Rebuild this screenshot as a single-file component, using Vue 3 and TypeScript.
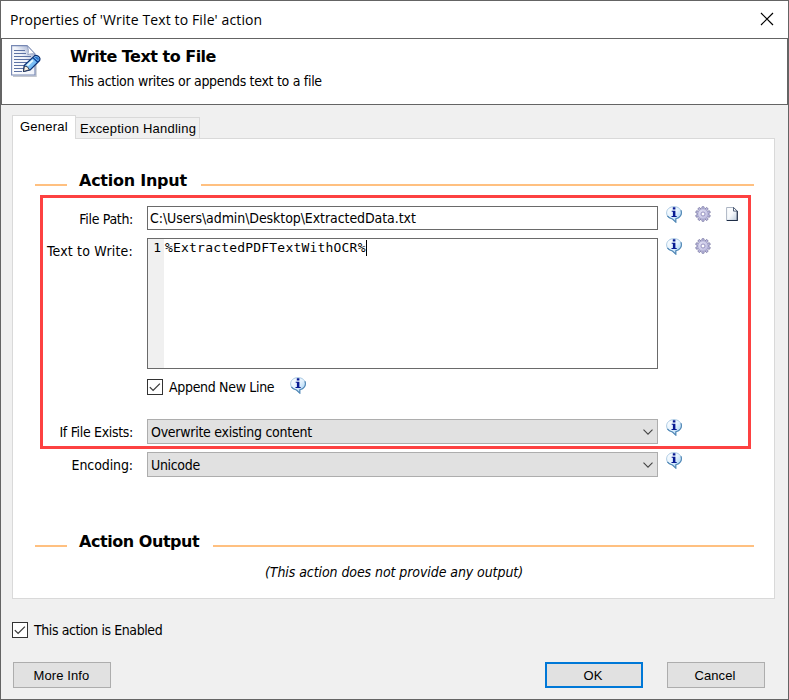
<script setup lang="ts">
import { ref, h, type FunctionalComponent } from 'vue'

const filePath = ref('C:\\Users\\admin\\Desktop\\ExtractedData.txt')
const textToWrite = ref('%ExtractedPDFTextWithOCR%')
const appendNewLine = ref(true)
const enabled = ref(true)

const InfoIcon: FunctionalComponent = () =>
  h('svg', { width: 16, height: 17, viewBox: '0 0 16 17' }, [
    h('path', {
      d: 'M8 .6C3.800 .6 .6 3.200 .6 6.900c0 3.300 2.200 5.500 5.900 6.100l3.300 3.300V13c3.400-.6 5.600-3 5.600-6.100C15.400 3.200 12.200 .6 8 .6z',
      fill: 'url(#bubble)', stroke: '#a3c4e0', 'stroke-width': 0.9,
    }),
    h('path', {
      d: 'M14.900 4.200c.7 1.700.6 3.900-.4 5.500-1 1.600-2.600 2.700-4.700 3.100v3.300L6.500 13C4.300 12.600 2.500 11.600 1.400 9.900',
      fill: 'none', stroke: '#4f86b4', 'stroke-width': 1.1,
    }),
    h('path', { d: 'M6.800 1.200h2.600v2.200H6.800zM5.700 4.700h3.700v5.200h1.300V11H5.500V9.900h1.400V5.800H5.700z', fill: '#071a92' }),
  ])

const teethAngles = Array.from({ length: 10 }, (_, i) => i * 36)

const GearIcon: FunctionalComponent = () =>
  h('svg', { width: 16, height: 16, viewBox: '0 0 16 16' }, [
    h('g', { fill: '#b9b7dc', stroke: '#76749f', 'stroke-width': 0.7 },
      teethAngles.map((a) => h('rect', { x: 6.8, y: 0.6, width: 2.4, height: 3, rx: 0.7, transform: `rotate(${a} 8 8)` }))),
    h('circle', { cx: 8, cy: 8, r: 5.1, fill: 'url(#metal)', stroke: '#a3a1cb', 'stroke-width': 0.6 }),
    h('circle', { cx: 8, cy: 8, r: 2, fill: '#fff', stroke: '#9793c0', 'stroke-width': 1 }),
  ])

const CheckMark: FunctionalComponent = () =>
  h('svg', { width: 14, height: 14, viewBox: '0 0 14 14' }, [
    h('path', { d: 'M1.800 7.100l3.300 3.300 6.800-6.800', fill: 'none', stroke: '#3c3c3c', 'stroke-width': 1.3 }),
  ])

const Chevron: FunctionalComponent = () =>
  h('svg', { width: 10, height: 6, viewBox: '0 0 10 6' }, [
    h('path', { d: 'M.5 .6L5 5.100 9.500 .6', fill: 'none', stroke: '#444', 'stroke-width': 1.1 }),
  ])
</script>

<template>
  <div class="window">
    <svg class="defs" width="0" height="0">
      <defs>
        <linearGradient id="bubble" x1="0" y1="0" x2="1" y2="1">
          <stop offset="0" stop-color="#fff" /><stop offset=".5" stop-color="#e3f2fe" /><stop offset="1" stop-color="#93c6f0" />
        </linearGradient>
        <linearGradient id="metal" x1="0" y1="0" x2="1" y2="1">
          <stop offset="0" stop-color="#e4e3f5" /><stop offset="1" stop-color="#bbb9de" />
        </linearGradient>
        <linearGradient id="paper" x1="0" y1="0" x2="1" y2="1">
          <stop offset="0" stop-color="#fff" /><stop offset=".5" stop-color="#f6f9fc" /><stop offset="1" stop-color="#bccbdc" />
        </linearGradient>
      </defs>
    </svg>

    <div class="titlebar">
      <span class="t-title">Properties of 'Write Text to File' action</span>
      <svg class="close" width="14" height="14" viewBox="0 0 14 14">
        <path d="M1 1l12 12M13 1L1 13" stroke="#000" stroke-width="1.2" />
      </svg>
    </div>

    <header class="header">
      <svg class="doc" width="32" height="33" viewBox="0 0 32 33">
        <defs>
          <linearGradient id="sheet" x1="0" y1="1" x2="1" y2="0">
            <stop offset="0" stop-color="#fff" /><stop offset=".55" stop-color="#f0f3fa" /><stop offset="1" stop-color="#8c9cc4" />
          </linearGradient>
          <linearGradient id="pen" x1="0" y1="0" x2="1" y2="1">
            <stop offset="0" stop-color="#c4ecff" /><stop offset="1" stop-color="#3d98ee" />
          </linearGradient>
        </defs>
        <path d="M2 31.300h23V11" fill="none" stroke="#c4c7ce" stroke-width="1.500" />
        <path d="M.6 .6h15.400l8 8.400v21H.6z" fill="url(#sheet)" stroke="#7687b3" stroke-width="1.100" />
        <path d="M16 .6c1.500 3 1.800 6 .8 9.100 2.500-1 5-1.200 7.200-.7z" fill="#fff" stroke="#8493b8" stroke-width=".8" />
        <path d="M3 5.500h11M3 8.500h12M3 11.500h17M3 14.500h16M3 17.500h14M3 20.500h12M3 23.500h10M3 26.500h8" stroke="#5d72a4" stroke-width="1" />
        <path d="M13.200 20.500L23.800 10.600c1.700-.8 5 .6 5.200 3.200L28.600 15.500 19.300 24.800 12.500 26.500z" fill="url(#pen)" stroke="#0b2f72" stroke-width="1.200" stroke-linejoin="round" />
        <path d="M12.500 26.500l1-5.500 3 .9 1.900 2.900z" fill="#f7eedf" stroke="#25304c" stroke-width=".9" />
        <path d="M22 12.700l4.900 4.500" stroke="#0b3f95" stroke-width="1.300" />
        <path d="M24.200 11.800c1.300-.6 3.600 .7 3.800 2.300l-.9 1.200-3.700-3z" fill="#2a72cb" />
        <path d="M16.300 20.500l5.500-5.200" stroke="#e4f8ff" stroke-width="1.800" />
      </svg>
      <div class="heading">
        <h1>Write Text to File</h1>
        <p class="t-desc">This action writes or appends text to a file</p>
      </div>
    </header>

    <div class="body">
      <nav class="tabs">
        <div class="tab active">General</div>
        <div class="tab">Exception Handling</div>
      </nav>

      <main class="panel">
        <div class="section first"><i class="short" /><h2 class="t-in">Action Input</h2><i class="long" /></div>

        <div class="form">
          <div class="row file">
            <label class="t-fp">File Path:</label>
            <div class="field"><span class="t-path">{{ filePath }}</span></div>
            <div class="icons">
              <InfoIcon /><GearIcon />
              <svg class="page" width="12" height="16" viewBox="0 0 12 16">
                <path d="M.6 1.500h7l3.500 3.500v9.400H.6z" fill="url(#paper)" stroke="#a3adbc" stroke-width=".9" />
                <path d="M.8 14.500h10.500V5" fill="none" stroke="#1d2c46" stroke-width="1.100" />
                <path d="M7.500 1.400v3.700h3.700z" fill="#fff" stroke="#44546e" stroke-width=".9" />
              </svg>
            </div>
          </div>
          <div class="row text">
            <label class="t-tw">Text to Write:</label>
            <div class="editor">
              <div class="gutter">1</div>
              <div class="code"><span class="t-code">{{ textToWrite }}</span><i class="caret" /></div>
            </div>
            <div class="icons"><InfoIcon /><GearIcon /></div>
          </div>
          <div class="row append">
            <span />
            <div class="check-line">
              <span class="check"><CheckMark v-if="appendNewLine" /></span>
              <span class="check-label t-app">Append New Line</span>
              <InfoIcon class="inline-info" />
            </div>
          </div>
          <div class="row exists">
            <label class="t-ife">If File Exists:</label>
            <div class="select"><span class="t-over">Overwrite existing content</span><Chevron /></div>
            <div class="icons"><InfoIcon /></div>
          </div>
          <div class="row encoding">
            <label class="t-enc">Encoding:</label>
            <div class="select"><span class="t-uni">Unicode</span><Chevron /></div>
            <div class="icons"><InfoIcon /></div>
          </div>
        </div>

        <div class="section second"><i class="short" /><h2 class="t-out">Action Output</h2><i class="long" /></div>
        <p class="none">(This action does not provide any output)</p>
        <div class="highlight" />
      </main>

      <div class="enabled">
        <span class="check"><CheckMark v-if="enabled" /></span>
        <span class="check-label t-ena">This action is Enabled</span>
      </div>

      <footer class="buttons">
        <button class="btn">More Info</button>
        <button class="btn primary">OK</button>
        <button class="btn">Cancel</button>
      </footer>
    </div>
  </div>
</template>

<style>
body { margin: 0; background: #f0f0f0; }
</style>

<style scoped>
* { box-sizing: border-box; }
.window {
  width: 789px; height: 700px; position: relative; overflow: hidden;
  display: flex; flex-direction: column;
  border: 1px solid #646464; background: #f0f0f0; color: #000;
  font-family: "DejaVu Sans Condensed", "DejaVu Sans", sans-serif; font-stretch: condensed;
  font-size: 14px; line-height: 18px; white-space: nowrap;
}
.defs { position: absolute; }
h1, h2, p { margin: 0; }
svg { display: block; flex: none; }
.titlebar { height: 37px; background: #fff; display: flex; justify-content: space-between; padding: 9px 14px 0 9px; font-family: "Open Sans", sans-serif; font-stretch: normal; font-size: 14px; line-height: 20px; letter-spacing: .12px; }
.close { margin-top: 2px; }
.header { height: 67px; border: 1px solid #646464; background: #fff; display: flex; padding: 6px 0 0 9px; }
.heading { padding: 1px 0 0 26px; }
h1, h2 { font-family: "DejaVu Sans", sans-serif; font-stretch: normal; font-size: 16px; line-height: 22px; font-weight: bold; }
h1 { padding-left: 1px; letter-spacing: -.5px; }
.heading p { margin-top: 4px; }
.t-desc { letter-spacing: -.3px; }
.t-path { letter-spacing: -.08px; }
.t-fp, .t-app, .t-ife, .t-uni { letter-spacing: -.32px; }
.t-tw { letter-spacing: .2px; }
.t-enc { letter-spacing: -.1px; }
.t-over { letter-spacing: -.26px; }
.t-ena { letter-spacing: -.42px; }
.t-code { letter-spacing: .2px; }
.body { flex: 1; display: flex; flex-direction: column; padding: 10px 13px 0 11px; }
.tabs { display: flex; align-items: flex-end; height: 24px; margin-bottom: -1px; position: relative; z-index: 1; font-family: "Liberation Sans", sans-serif; font-stretch: normal; font-size: 13px; letter-spacing: .23px; }
.tab { height: 22px; width: 124px; border: 1px solid #d9d9d9; border-left: 0; padding: 2px 0 0 4px; line-height: 18px; }
.tab.active { height: 24px; width: 64px; border: 1px solid #d9d9d9; border-bottom: 0; background: #fff; padding: 2px 0 0 7px; }
.panel { height: 461px; border: 1px solid #d9d9d9; background: #fff; position: relative; }
.section { display: flex; align-items: flex-start; padding: 0 20px 0 22px; height: 24px; }
.section i { height: 2px; background: #ffc080; margin-top: 14px; }
.short { width: 32px; }
.long { flex: 1; }
h2 { margin-left: 12px; }
.section.first { margin-top: 31px; }
h2.t-in { width: 122px; letter-spacing: -.25px; }
h2.t-out { width: 134px; letter-spacing: -.45px; }
.form { margin-top: 12px; }
.row { display: grid; grid-template-columns: 120px 511px 1fr; column-gap: 14px; }
.row label { text-align: right; padding-top: 4px; }
.file { height: 32px; }
.text { height: 141px; }
.append { height: 40px; }
.exists { height: 33px; }
.encoding { height: 79px; }
.field { height: 24px; border: 1px solid #6a6a6a; padding: 2px 0 0 2px; }
.editor { height: 131px; border: 1px solid #6a6a6a; display: flex; font-family: "DejaVu Sans Mono", monospace; font-stretch: normal; font-size: 13px; line-height: 18px; }
.gutter { width: 16px; background: #f0f0f0; text-align: right; padding-right: 3px; }
.code { padding-left: 1px; display: flex; }
.caret { width: 1px; height: 16px; margin-top: 1px; background: #000; }
.icons { display: flex; gap: 13px; margin-left: -6px; }
.page { margin-left: 2px; }
.check-line { display: flex; }
.check { width: 16px; height: 16px; border: 1px solid #333; background: #fff; flex: none; }
.check-label { margin: -1px 0 0 6px; }
.t-app { width: 121px; }
.inline-info { margin-top: -2px; }
.select { height: 25px; border: 1px solid #adadad; background: #e1e1e1; display: flex; justify-content: space-between; padding: 3px 4px 0 3px; }
.select svg { margin-top: 6px; }
.none { text-align: center; margin-top: 8px; padding-left: 1px; font-style: italic; letter-spacing: -.08px; }
.highlight { position: absolute; left: 27px; top: 56px; width: 711px; height: 254px; border: 3px solid #fd4141; }
.enabled { display: flex; margin-top: 23px; height: 40px; }
.buttons { display: flex; gap: 24px; margin: 0 10px 0 1px; }
.btn { width: 98px; height: 26px; padding: 0 2px 0 0; border: 1px solid #adadad; background: #e1e1e1; font: 13px "Liberation Sans", sans-serif; letter-spacing: .1px; color: #000; }
.btn:first-child { margin-right: auto; padding-right: 1px; }
.primary { border: 2px solid #0078d7; }
</style>
